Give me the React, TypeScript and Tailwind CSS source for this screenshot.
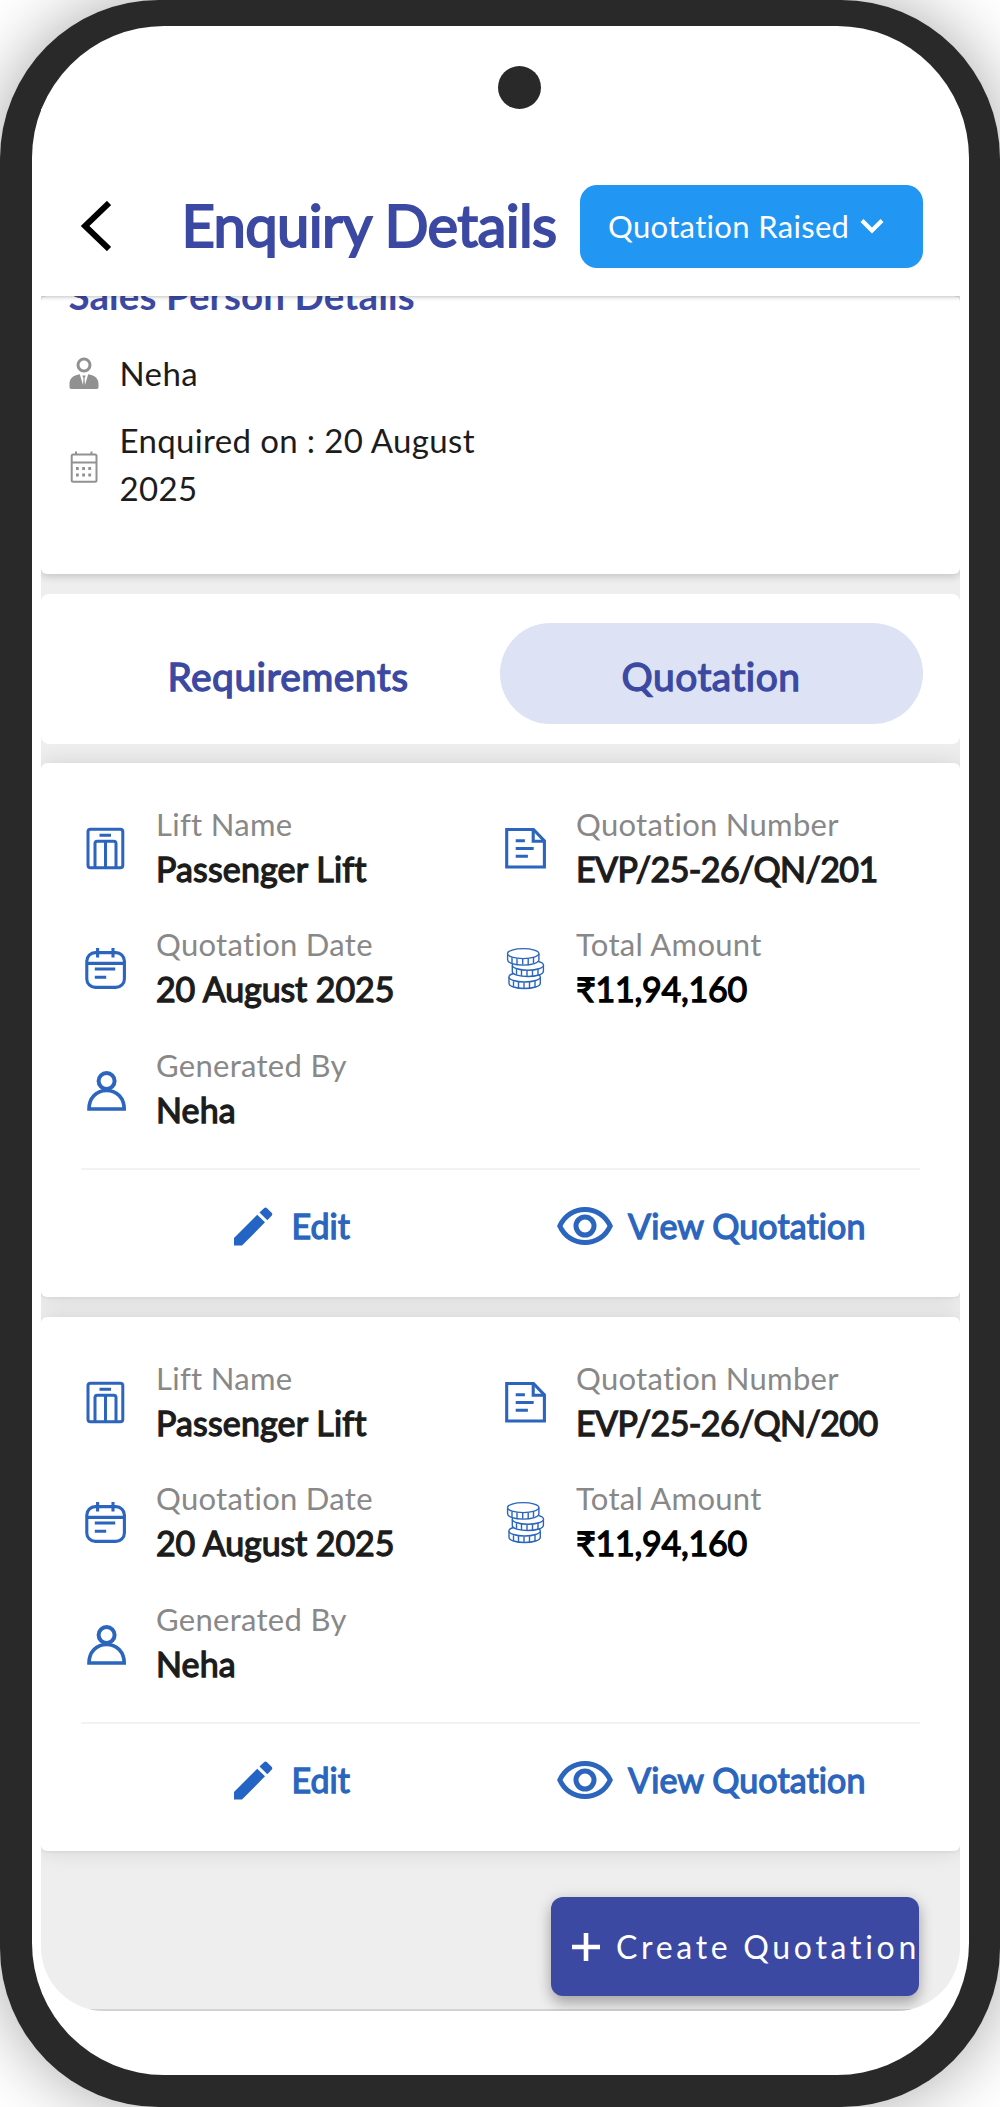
import { ReactNode } from "react";

interface Quotation {
  id: number;
  liftName: string;
  number: string;
  date: string;
  amount: string;
  generatedBy: string;
}

interface FieldProps {
  icon: ReactNode;
  label: string;
  value: string;
  valueClass?: string;
}

const quotations: Quotation[] = [
  {
    id: 201,
    liftName: "Passenger Lift",
    number: "EVP/25-26/QN/201",
    date: "20 August 2025",
    amount: "₹11,94,160",
    generatedBy: "Neha",
  },
  {
    id: 200,
    liftName: "Passenger Lift",
    number: "EVP/25-26/QN/200",
    date: "20 August 2025",
    amount: "₹11,94,160",
    generatedBy: "Neha",
  },
];

const iconClass = "w-12 h-12 shrink-0 text-[#2b65bd]";

const LiftIcon = () => (
  <svg viewBox="0 0 48 48" className={iconClass} fill="none" stroke="currentColor" strokeWidth="3">
    <rect x="6" y="6.3" width="34.8" height="38.4" rx="2.5" />
    <path d="M17.5 12.2h11.5M13 44V20.5q0-2.3 2.3-2.3h16.4q2.3 0 2.3 2.3V44M23.5 18.5V44" />
  </svg>
);

const DateIcon = () => (
  <svg viewBox="0 0 48 48" className={iconClass} fill="none" stroke="currentColor" strokeWidth="3.1">
    <rect x="4.8" y="9.6" width="37.6" height="34.8" rx="8.5" />
    <path d="M15.6 5v9.5M31 5v9.5M5 20.4h37.4M12.8 26h20.4M12.8 34.2h11.4" />
  </svg>
);

const PersonIcon = () => (
  <svg viewBox="0 0 48 48" className={iconClass} fill="none" stroke="currentColor" strokeWidth="4">
    <circle cx="24.6" cy="17" r="8" />
    <path d="M7 45c0-10.5 7-18.5 17.6-18.5S42.2 34.5 42.2 45z" strokeWidth="3.6" />
  </svg>
);

const DocIcon = () => (
  <svg viewBox="0 0 48 48" className={iconClass} fill="none" stroke="currentColor" strokeWidth="3.1">
    <path d="M4.7 6.5H31.5L42.4 17.8V44H4.7z" />
    <path d="M31.2 6.5V18.2H42.4" />
    <path d="M13.7 17.8h9.2M13.7 25.5h18M13.7 33.2h12.2" />
  </svg>
);

const CoinsIcon = () => (
  <svg viewBox="0 0 48 48" className={iconClass} fill="white" stroke="currentColor" strokeWidth="1.4">
    <path d="M7 34.2v6c0 3 6.8 5.3 15.5 5.3s15.8-2.3 15.8-5.3v-6" />
    <ellipse cx="22.6" cy="34" rx="15.7" ry="5" />
    <path d="M11.5 38.2v5.5M16.5 39v6M22 39.5v6M27.5 39.2v6M33 38v6" />
    <path d="M10.3 22.5v6c0 3 6.8 5 15.5 5s15.6-2.3 15.6-5.3v-6" />
    <ellipse cx="25.9" cy="22.2" rx="15.6" ry="5" />
    <path d="M14.5 26.2v5.5M19.5 27v6M25 27.5v6M30.5 27.2v6M36 26v6" />
    <path d="M5.6 10.8v6c0 3 6.8 5.3 15.6 5.3s15.7-2.3 15.7-5.3v-6" />
    <ellipse cx="21.2" cy="10.6" rx="15.7" ry="5" />
    <path d="M10 14.5v5.5M15 15.4v6M20.7 15.8v6M26.2 15.5v6M31.5 14.3v6" />
  </svg>
);

const PencilIcon = () => (
  <svg viewBox="0 0 39 39" className="w-[39px] h-[39px] text-[#2464c4]" fill="currentColor">
    <path d="M0 31V38.5H8L31 15.3 23.2 7.7zM25.5 5.5l7.8 7.7 4.3-4.4q1.4-1.5 0-3l-4.6-4.6q-1.5-1.4-3 0z" />
  </svg>
);

const EyeIcon = () => (
  <svg viewBox="0 0 56 40" className="w-14 h-10 text-[#2b65bd]" fill="none" stroke="currentColor" strokeWidth="5">
    <path d="M2.8 20C7.5 9.5 17 3.5 28 3.5S48.5 9.5 53.2 20C48.5 30.5 39 36.5 28 36.5S7.5 30.5 2.8 20z" />
    <circle cx="28" cy="20" r="9" />
  </svg>
);

const AgentIcon = () => (
  <svg viewBox="0 0 30 32" className="w-[30px] h-8 text-[#919191]" fill="currentColor">
    <circle cx="15" cy="8" r="6" fill="none" stroke="currentColor" strokeWidth="3" />
    <path d="M10.8 17.3L14 28l.5-6.5-1.2-3h3.4l-1.2 3L16 28l3.2-10.7C26 18.3 29.5 21.5 29.5 27v3.2q0 1.8-1.8 1.8H2.3Q.5 32 .5 30.2V27c0-5.5 3.5-8.7 10.3-9.7z" />
  </svg>
);

const CalendarIcon = () => (
  <svg viewBox="0 0 30 32" className="mt-[6px] w-[30px] h-8 text-[#919191]" fill="none" stroke="currentColor" strokeWidth="2">
    <rect x="2.7" y="3.5" width="24.8" height="27.3" rx="1.5" />
    <path d="M7 .5v3M22.5 .5v3M2.7 11.5h24.8" />
    <path d="M7 17.5h2.8M13.2 17.5h2.8M19.3 17.5h2.8M7 24h2.8M13.2 24h2.8M19.3 24h2.8" strokeWidth="3" />
  </svg>
);

const Field = ({ icon, label, value, valueClass = "text-[#1c1c1c] tracking-[0.15px]" }: FieldProps) => (
  <div className="flex items-center gap-[26px] h-[90px]">
    {icon}
    <div className="whitespace-nowrap">
      <p className="text-[31px] leading-[44px] tracking-[0.3px] text-[#888888]">{label}</p>
      <p className={`text-[34px] leading-[46px] [-webkit-text-stroke:1.3px_currentColor] ${valueClass}`}>{value}</p>
    </div>
  </div>
);

const QuotationCard = ({ quotation }: { quotation: Quotation }) => (
  <div className="h-[534px] shrink-0 rounded-[6px] bg-white pt-[38.7px] shadow-[0_1px_3px_rgba(0,0,0,0.06),0_0_22px_rgba(0,0,0,0.11)]">
    <div className="grid grid-cols-[420px_1fr] gap-y-[30.7px] pl-[41.5px]">
      <Field icon={<LiftIcon />} label="Lift Name" value={quotation.liftName} />
      <Field
        icon={<DocIcon />}
        label="Quotation Number"
        value={quotation.number}
        valueClass="text-[#1c1c1c] tracking-[-0.6px]"
      />
      <Field
        icon={<DateIcon />}
        label="Quotation Date"
        value={quotation.date}
        valueClass="text-[#1c1c1c] tracking-[-0.1px]"
      />
      <Field
        icon={<CoinsIcon />}
        label="Total Amount"
        value={quotation.amount}
        valueClass="text-black tracking-[-0.2px]"
      />
      <Field icon={<PersonIcon />} label="Generated By" value={quotation.generatedBy} />
    </div>
    <div className="mx-10 mt-[35px] grid grid-cols-2 border-t-2 border-[#f2f2f2] pt-[35px] text-[34px] leading-[42px] tracking-[0.1px] text-[#2b65bd] [-webkit-text-stroke:1.3px_currentColor]">
      <button className="flex items-center justify-center gap-[18px] pl-1">
        <PencilIcon />
        Edit
      </button>
      <button className="flex items-center justify-center gap-[15px] pl-[3px]">
        <EyeIcon />
        View Quotation
      </button>
    </div>
  </div>
);

const App = () => {
  return (
    <div className="h-[2107px] w-[1000px] overflow-hidden bg-white font-['Lato',sans-serif] [font-variant-ligatures:none]">
      <div className="h-[2106.5px] rounded-[159px] bg-[#292929] px-[31.5px] pt-[26px] pb-[32px] shadow-[0_0_70px_rgba(0,0,0,0.35)]">
        <div className="flex h-full flex-col rounded-[132px] bg-white px-[9px] pt-10">
          <div className="ml-[457.5px] h-[43px] w-[43px] shrink-0 rounded-full bg-[#292929]" />

          <div className="flex h-[1902px] flex-col overflow-hidden rounded-b-[64px] bg-[#eeeeee]">
            {/* header */}
            <div className="z-10 flex h-[187px] shrink-0 items-center bg-white pt-[47px] pl-[40px] shadow-[0_1px_4px_rgba(0,0,0,0.25)]">
              <svg viewBox="0 0 30 50" className="h-[50px] w-[30px]" fill="none" stroke="black" strokeWidth="6">
                <path d="M28 2L4 25l24 23" />
              </svg>
              <h1 className="-mt-[2px] ml-[71px] w-[398px] text-[58px] leading-[70px] tracking-[-0.65px] whitespace-nowrap text-[#3b49a3] [-webkit-text-stroke:2px_currentColor]">
                Enquiry Details
              </h1>
              <button className="flex h-[83px] w-[343px] items-center rounded-[17px] bg-[#2196f3] pl-[28.5px] text-[31px] tracking-[0.33px] whitespace-nowrap text-white">
                Quotation Raised
                <svg viewBox="0 0 24 16" className="ml-[11px] h-4 w-6" fill="none" stroke="white" strokeWidth="4.2">
                  <path d="M2 2.5l10 10 10-10" />
                </svg>
              </button>
            </div>

            {/* sales person */}
            <div className="h-[277.5px] shrink-0 rounded-[6px] bg-white pl-[28px] shadow-[0_2px_8px_rgba(0,0,0,0.2)]">
              <h2 className="-mt-[23px] text-[38.5px] leading-[44px] font-bold tracking-[0.1px] text-[#3b49a3]">
                Sales Person Details
              </h2>
              <div className="mt-[32px] flex items-center gap-[21px]">
                <AgentIcon />
                <p className="text-[33px] leading-[48.4px] tracking-[0.4px] text-[#1c1c1c]">Neha</p>
              </div>
              <div className="mt-[18.5px] flex items-center gap-[21px]">
                <CalendarIcon />
                <p className="w-[380px] text-[33px] leading-[48.4px] tracking-[0.35px] text-[#1c1c1c]">
                  Enquired on : 20 August 2025
                </p>
              </div>
            </div>

            {/* tabs */}
            <div className="mt-[20px] mb-[19.5px] flex h-[150px] shrink-0 rounded-[8px] bg-white pt-[29px] pl-[36px] text-[39px] tracking-[0.45px] text-[#3b49a3] [-webkit-text-stroke:1.3px_currentColor]">
              <button className="h-[101px] w-[423px] pt-1.5">Requirements</button>
              <button className="h-[101px] w-[423px] rounded-full bg-[#dde3f5] pt-1.5">Quotation</button>
            </div>

            <div className="flex flex-col gap-5">
              {quotations.map((quotation) => (
                <QuotationCard key={quotation.id} quotation={quotation} />
              ))}
            </div>

            <div className="flex h-[160px] shrink-0 justify-end border-b-2 border-[#d2d2d2] pt-[46px] pr-[40.5px]">
              <button className="flex h-[99px] w-[368px] items-center gap-[15px] rounded-[12px] bg-[#3b49a3] pl-5 text-[32px] tracking-[3.7px] whitespace-nowrap text-white shadow-[0_8px_14px_rgba(0,0,0,0.25),0_0_16px_rgba(0,0,0,0.1)]">
                <svg viewBox="0 0 30 30" className="h-[30px] w-[30px] shrink-0" fill="none" stroke="white" strokeWidth="4.6">
                  <path d="M15 1v28M1 15h28" />
                </svg>
                Create Quotation
              </button>
            </div>
          </div>
        </div>
      </div>
    </div>
  );
};

export default App;
